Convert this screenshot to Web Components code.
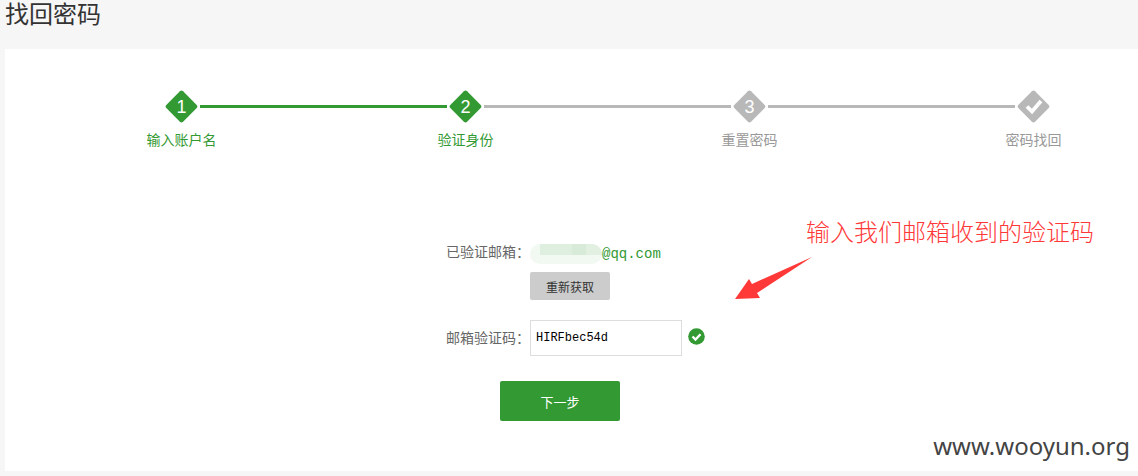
<!DOCTYPE html>
<html lang="zh-CN">
<head>
<meta charset="utf-8">
<title>找回密码</title>
<style>
  body {
    margin: 0;
    background: #f6f6f6;
    color: #666;
    font: 14px/20px "Liberation Sans", "Noto Sans CJK SC", sans-serif;
  }
</style>
</head>
<body>
<recover-page></recover-page>

<script>
const define = (name, html) => {
  const template = document.createElement('template');
  template.innerHTML = html;
  customElements.define(name, class extends HTMLElement {
    constructor() {
      super();
      this.attachShadow({ mode: 'open' }).append(template.content.cloneNode(true));
    }
  });
};

define('step-item', `
  <style>
    :host { display: flex; flex-direction: column; align-items: center; width: 33px; color: #999; --fill: #b8b8b8; }
    :host([done]) { color: #393; --fill: #393; }
    .badge { display: grid; place-items: center; width: 33px; height: 33px; color: #fff; font-size: 18px; line-height: 32px; }
    .badge > * { grid-area: 1 / 1; }
    .badge slot { display: grid; }
    svg { width: 33px; height: 33px; fill: var(--fill); }
    .label { margin-top: 7px; white-space: nowrap; }
  </style>
  <div class="badge">
    <svg viewBox="0 0 33 33" aria-hidden="true"><path d="M14.9 1.3q1.6-1.4 3.2 0l13.6 13.6q1.4 1.6 0 3.2L18.1 31.7q-1.6 1.4-3.2 0L1.3 18.1q-1.4-1.6 0-3.2z"/></svg>
    <slot name="mark"></slot>
  </div>
  <div class="label"><slot></slot></div>
`);

define('step-line', `
  <style>
    :host { display: block; flex: 1; height: 3px; margin: 15px 2px 0; background: #b8b8b8; }
    :host([done]) { background: #393; }
  </style>
`);

define('step-bar', `
  <style>
    :host { display: flex; align-items: flex-start; padding: 0 88px 0 160px; }
    svg { width: 33px; height: 33px; }
  </style>
  <step-item done><span slot="mark">1</span>输入账户名</step-item>
  <step-line done></step-line>
  <step-item done><span slot="mark">2</span>验证身份</step-item>
  <step-line></step-line>
  <step-item><span slot="mark">3</span>重置密码</step-item>
  <step-line></step-line>
  <step-item>
    <svg slot="mark" viewBox="0 0 33 33" role="img" aria-label="完成"><path d="M10 16.5l5 5L24 11" fill="none" stroke="#fff" stroke-width="3.8"/></svg>
    密码找回
  </step-item>
`);

define('masked-email', `
  <style>
    :host { display: flex; align-items: center; color: #393; font-family: "Liberation Mono", monospace; }
    .mask {
      width: 72px; height: 20px; border-radius: 10px;
      background:
        linear-gradient(90deg, transparent 0 10px, #dfefdf 10px 42px, #d8ebd8 42px 56px, #e1f0e1 56px) 0 0 / 100% 11px no-repeat,
        #f2f9f2;
    }
  </style>
  <span class="mask"></span><span><slot></slot></span>
`);

define('verify-form', `
  <style>
    :host { display: block; }
    form { width: 267px; margin: 0 auto; }
    .fields { display: grid; grid-template-columns: 92px 1fr; align-items: center; }
    .name { text-align: right; white-space: nowrap; }
    masked-email { margin-top: 4px; }
    button { border: 0; border-radius: 2px; font-family: inherit; padding: 0; }
    .resend { grid-column: 2; justify-self: start; width: 80px; height: 28px; margin: 8px 0 20px; background: #ccc; color: #333; font-size: 12px; }
    .entry { display: flex; align-items: center; gap: 6px; }
    input {
      box-sizing: border-box; width: 152px; height: 36px; padding: 0 5px; border: 1px solid #ddd; outline: 0;
      background: #fff; color: #000; font: 12px "Liberation Mono", monospace;
    }
    .ok { width: 17px; height: 17px; margin-bottom: 3px; }
    .next { display: block; width: 120px; height: 40px; margin: 25px 0 0 62px; background: #393; color: #fff; font-size: 13px; }
  </style>
  <form>
    <div class="fields">
      <span class="name">已验证邮箱：</span>
      <masked-email>@qq.com</masked-email>
      <button class="resend" type="button">重新获取</button>
      <label class="name" for="code">邮箱验证码：</label>
      <div class="entry">
        <input id="code" type="text" value="HIRFbec54d" autocomplete="off" spellcheck="false">
        <svg class="ok" viewBox="0 0 17 17" role="img" aria-label="正确"><circle cx="8.5" cy="8.5" r="8.3" fill="#393"/><path d="M4.5 8.5l3 3 5-5.3" fill="none" stroke="#fff" stroke-width="2.4"/></svg>
      </div>
    </div>
    <button class="next" type="button">下一步</button>
  </form>
`);

define('red-note', `
  <style>
    :host { display: block; color: #ff3838; font-size: 24px; font-weight: 300; line-height: 36px; white-space: nowrap; }
    .text { margin-left: 71px; }
    svg { display: block; width: 78px; height: 43px; margin-top: 6px; }
  </style>
  <div class="text"><slot></slot></div>
  <svg viewBox="0 0 78 43" aria-hidden="true"><path d="M77 0L17 27l-3-5L0 42l25-1-3-5z" fill="#ff3838"/></svg>
`);

define('recover-page', `
  <style>
    :host { display: block; padding: 0 0 5px 5px; }
    h1 { margin: 0; padding-bottom: 19px; color: #333; font-size: 24px; font-weight: 400; line-height: 30px; }
    main { position: relative; padding: 41px 0 50px; background: #fff; }
    verify-form { margin-top: 90px; }
    red-note { position: absolute; top: 166px; right: 44px; }
    .site { position: absolute; right: 8px; bottom: 7px; color: #444; font: 24px/36px "Noto Sans", sans-serif; }
  </style>
  <h1>找回密码</h1>
  <main>
    <step-bar></step-bar>
    <verify-form></verify-form>
    <red-note>输入我们邮箱收到的验证码</red-note>
    <div class="site">www.wooyun.org</div>
  </main>
`);
</script>
</body>
</html>
